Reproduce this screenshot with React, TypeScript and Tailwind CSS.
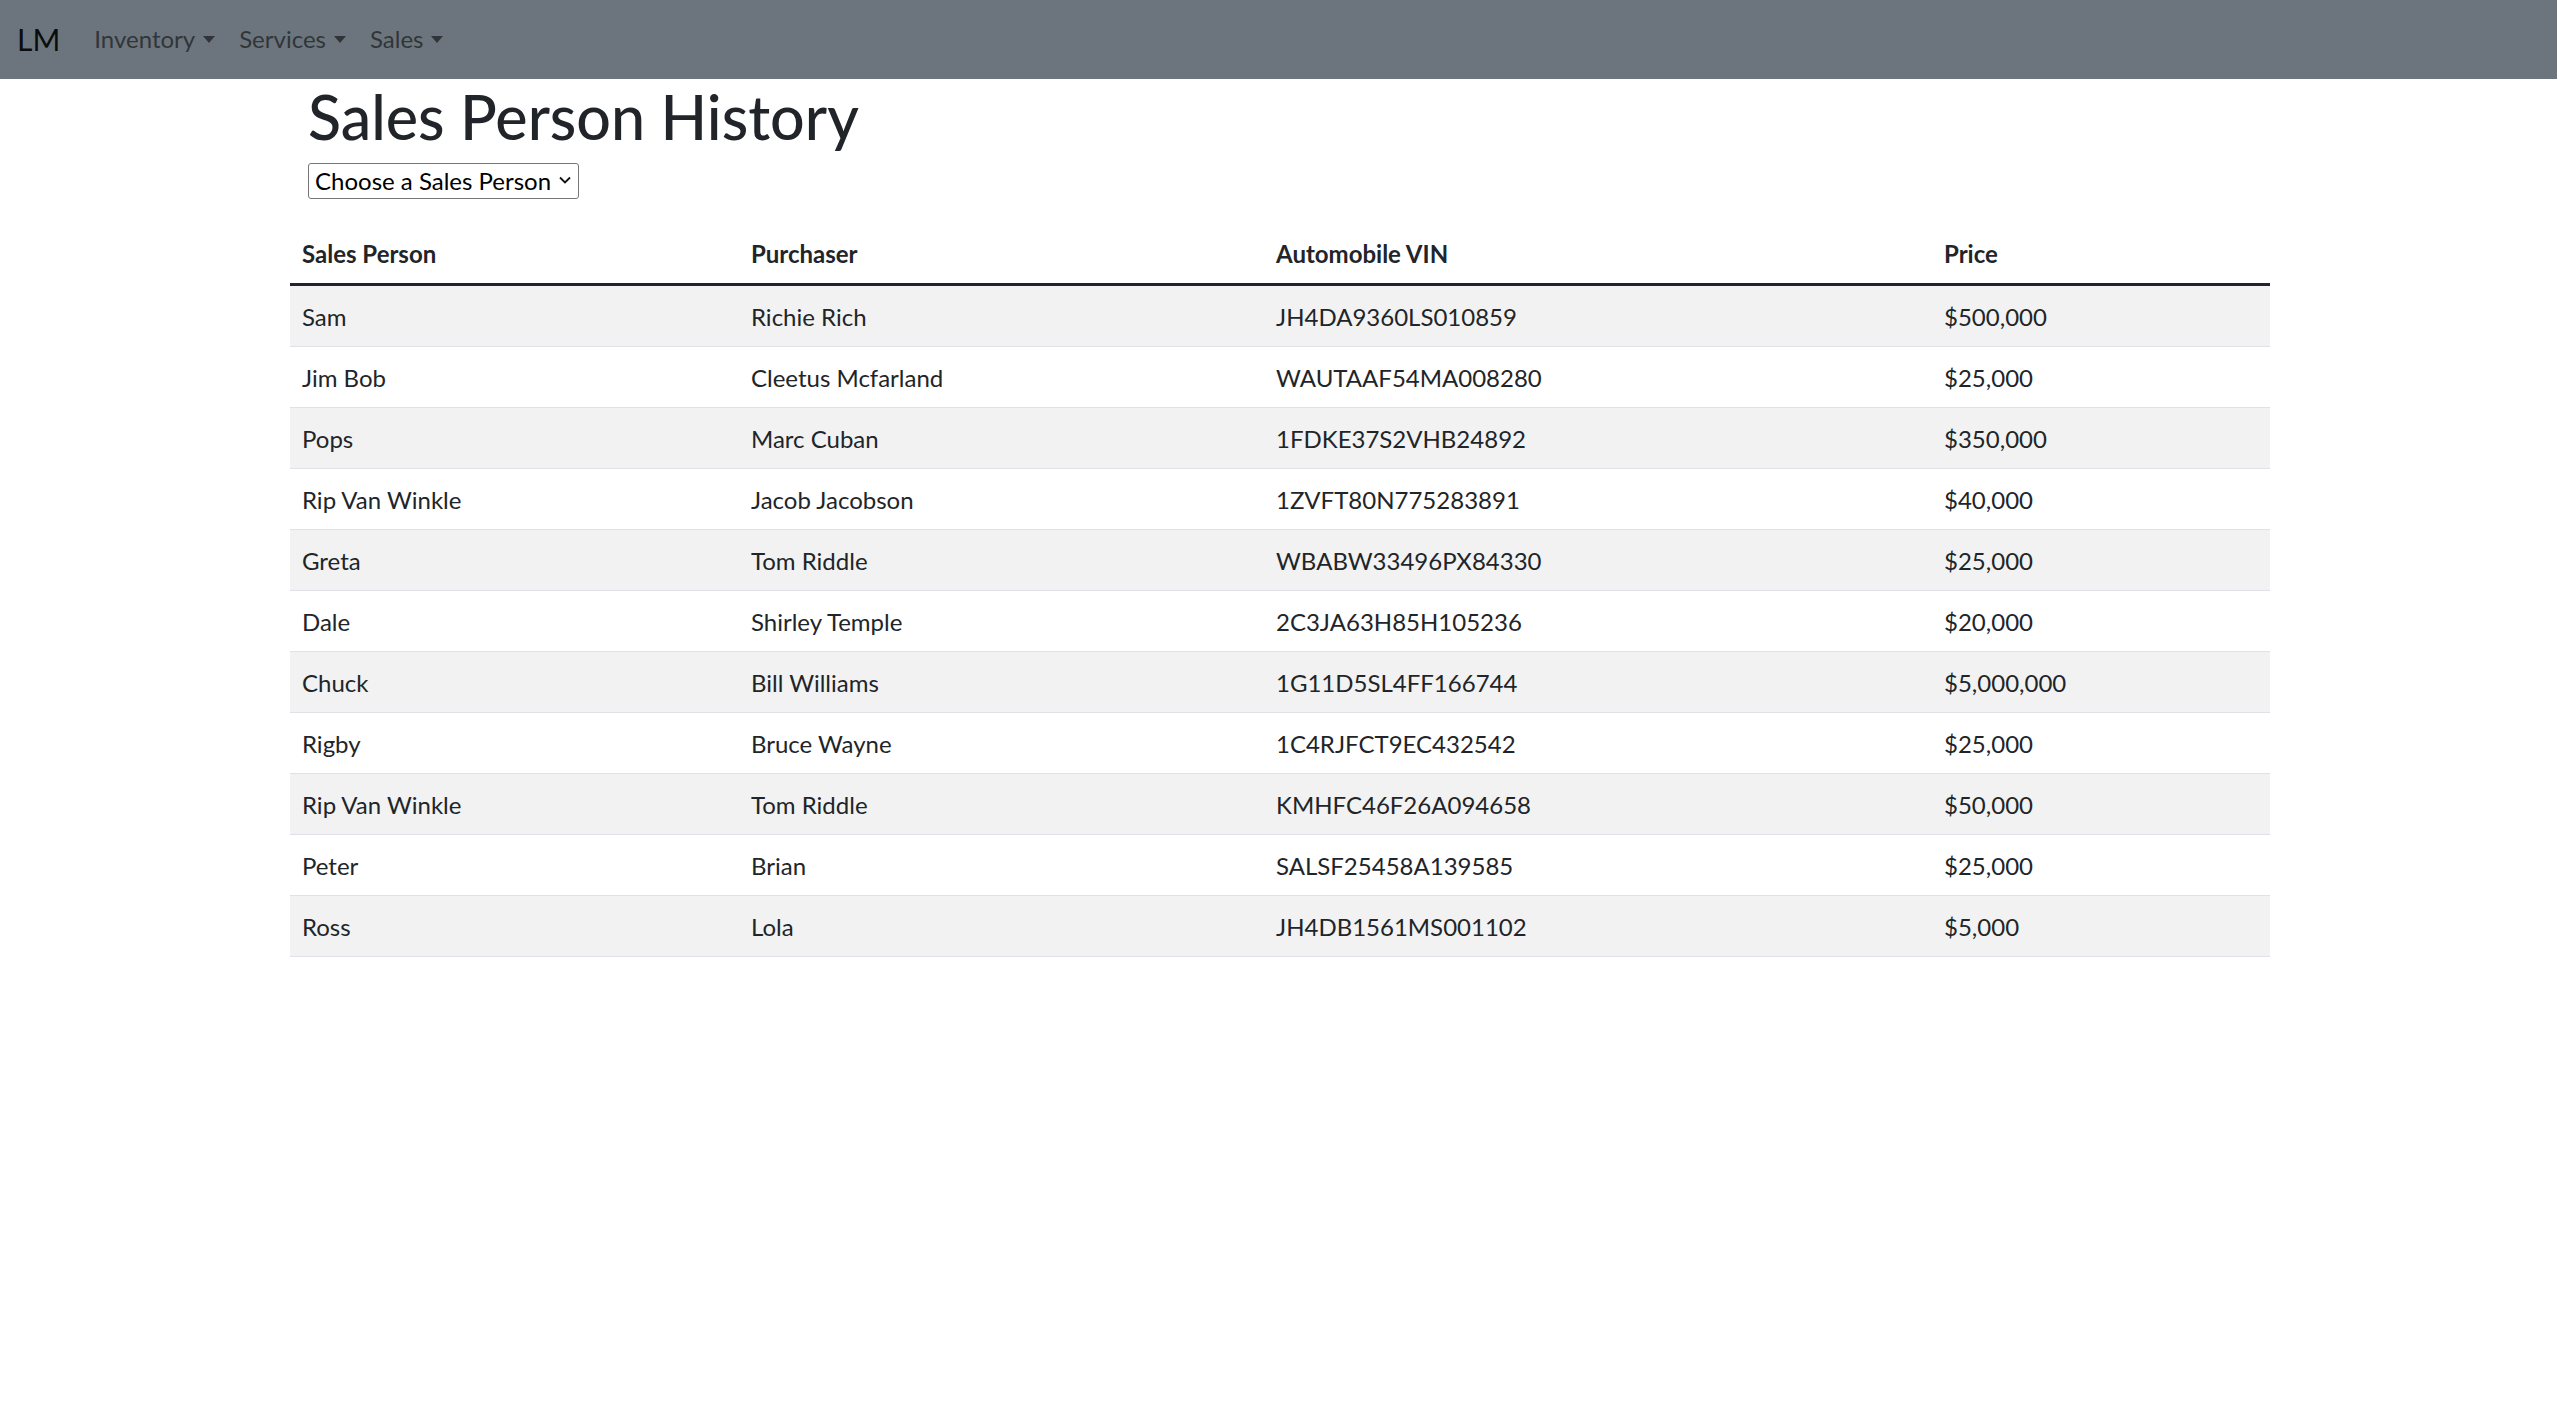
import { useState } from "react";

type Sale = {
  salesPerson: string;
  purchaser: string;
  vin: string;
  price: string;
};

const sales: Sale[] = [
  { salesPerson: "Sam", purchaser: "Richie Rich", vin: "JH4DA9360LS010859", price: "$500,000" },
  { salesPerson: "Jim Bob", purchaser: "Cleetus Mcfarland", vin: "WAUTAAF54MA008280", price: "$25,000" },
  { salesPerson: "Pops", purchaser: "Marc Cuban", vin: "1FDKE37S2VHB24892", price: "$350,000" },
  { salesPerson: "Rip Van Winkle", purchaser: "Jacob Jacobson", vin: "1ZVFT80N775283891", price: "$40,000" },
  { salesPerson: "Greta", purchaser: "Tom Riddle", vin: "WBABW33496PX84330", price: "$25,000" },
  { salesPerson: "Dale", purchaser: "Shirley Temple", vin: "2C3JA63H85H105236", price: "$20,000" },
  { salesPerson: "Chuck", purchaser: "Bill Williams", vin: "1G11D5SL4FF166744", price: "$5,000,000" },
  { salesPerson: "Rigby", purchaser: "Bruce Wayne", vin: "1C4RJFCT9EC432542", price: "$25,000" },
  { salesPerson: "Rip Van Winkle", purchaser: "Tom Riddle", vin: "KMHFC46F26A094658", price: "$50,000" },
  { salesPerson: "Peter", purchaser: "Brian", vin: "SALSF25458A139585", price: "$25,000" },
  { salesPerson: "Ross", purchaser: "Lola", vin: "JH4DB1561MS001102", price: "$5,000" },
];

function NavDropdown({ label }: { label: string }) {
  return (
    <li>
      <a href="#" className="flex items-center px-[12px] text-[24px] leading-[36px] text-[#313539]">
        {label}
        <span className="ml-[8px] mt-[1px] h-0 w-0 border-x-[6px] border-t-[7px] border-x-transparent border-t-[#313539]" />
      </a>
    </li>
  );
}

export default function App() {
  const [salesPerson, setSalesPerson] = useState("");

  const rows = salesPerson ? sales.filter((s) => s.salesPerson === salesPerson) : sales;
  const names = Array.from(new Set(sales.map((s) => s.salesPerson)));

  return (
    <div className="min-h-screen bg-white font-['Lato',sans-serif] text-[#212529]">
      <nav className="flex h-[79px] items-center bg-[#6c757d] pb-[2px] pl-[17px]">
        <a href="#" className="mr-[22px] text-[30px] leading-none text-[#0b0c0d]">
          LM
        </a>
        <ul className="flex">
          <NavDropdown label="Inventory" />
          <NavDropdown label="Services" />
          <NavDropdown label="Sales" />
        </ul>
      </nav>

      <div className="ml-[290px] w-[1980px] pt-[2px]">
        <div className="px-[18px]">
          <h1 className="mb-[10px] text-[61px] font-medium leading-[72px]">Sales Person History</h1>
          <div className="relative w-[271px]">
            <select
              value={salesPerson}
              onChange={(e) => setSalesPerson(e.target.value)}
              className="h-[36px] w-full appearance-none rounded-[3px] border border-[#767676] bg-white pl-[6px] text-[24px] leading-[34px] text-black outline-none"
            >
              <option value="">Choose a Sales Person</option>
              {names.map((n) => (
                <option key={n} value={n}>
                  {n}
                </option>
              ))}
            </select>
            <svg
              className="pointer-events-none absolute right-[8px] top-[13px]"
              width="12"
              height="8"
              viewBox="0 0 12 8"
              fill="none"
              stroke="#111"
              strokeWidth="1.8"
            >
              <path d="M1 1.5l5 5 5-5" />
            </svg>
          </div>
        </div>

        <table className="mt-[24px] w-full table-fixed border-collapse text-left text-[24px] leading-[36px]">
          <colgroup>
            <col className="w-[449px]" />
            <col className="w-[525px]" />
            <col className="w-[668px]" />
            <col className="w-[338px]" />
          </colgroup>
          <thead>
            <tr className="border-b-[3px] border-[#212529]">
              <th className="px-[12px] pb-[11px] pt-[13px] font-bold">Sales Person</th>
              <th className="px-[12px] pb-[11px] pt-[13px] font-bold">Purchaser</th>
              <th className="px-[12px] pb-[11px] pt-[13px] font-bold">Automobile VIN</th>
              <th className="px-[12px] pb-[11px] pt-[13px] font-bold">Price</th>
            </tr>
          </thead>
          <tbody>
            {rows.map((sale, i) => (
              <tr key={sale.vin} className={`border-b border-[#dee2e6] ${i % 2 === 0 ? "bg-[#f2f2f2]" : "bg-white"}`}>
                <td className="px-[12px] pb-[11px] pt-[13px]">{sale.salesPerson}</td>
                <td className="px-[12px] pb-[11px] pt-[13px]">{sale.purchaser}</td>
                <td className="px-[12px] pb-[11px] pt-[13px]">{sale.vin}</td>
                <td className="px-[12px] pb-[11px] pt-[13px]">{sale.price}</td>
              </tr>
            ))}
          </tbody>
        </table>
      </div>
    </div>
  );
}
